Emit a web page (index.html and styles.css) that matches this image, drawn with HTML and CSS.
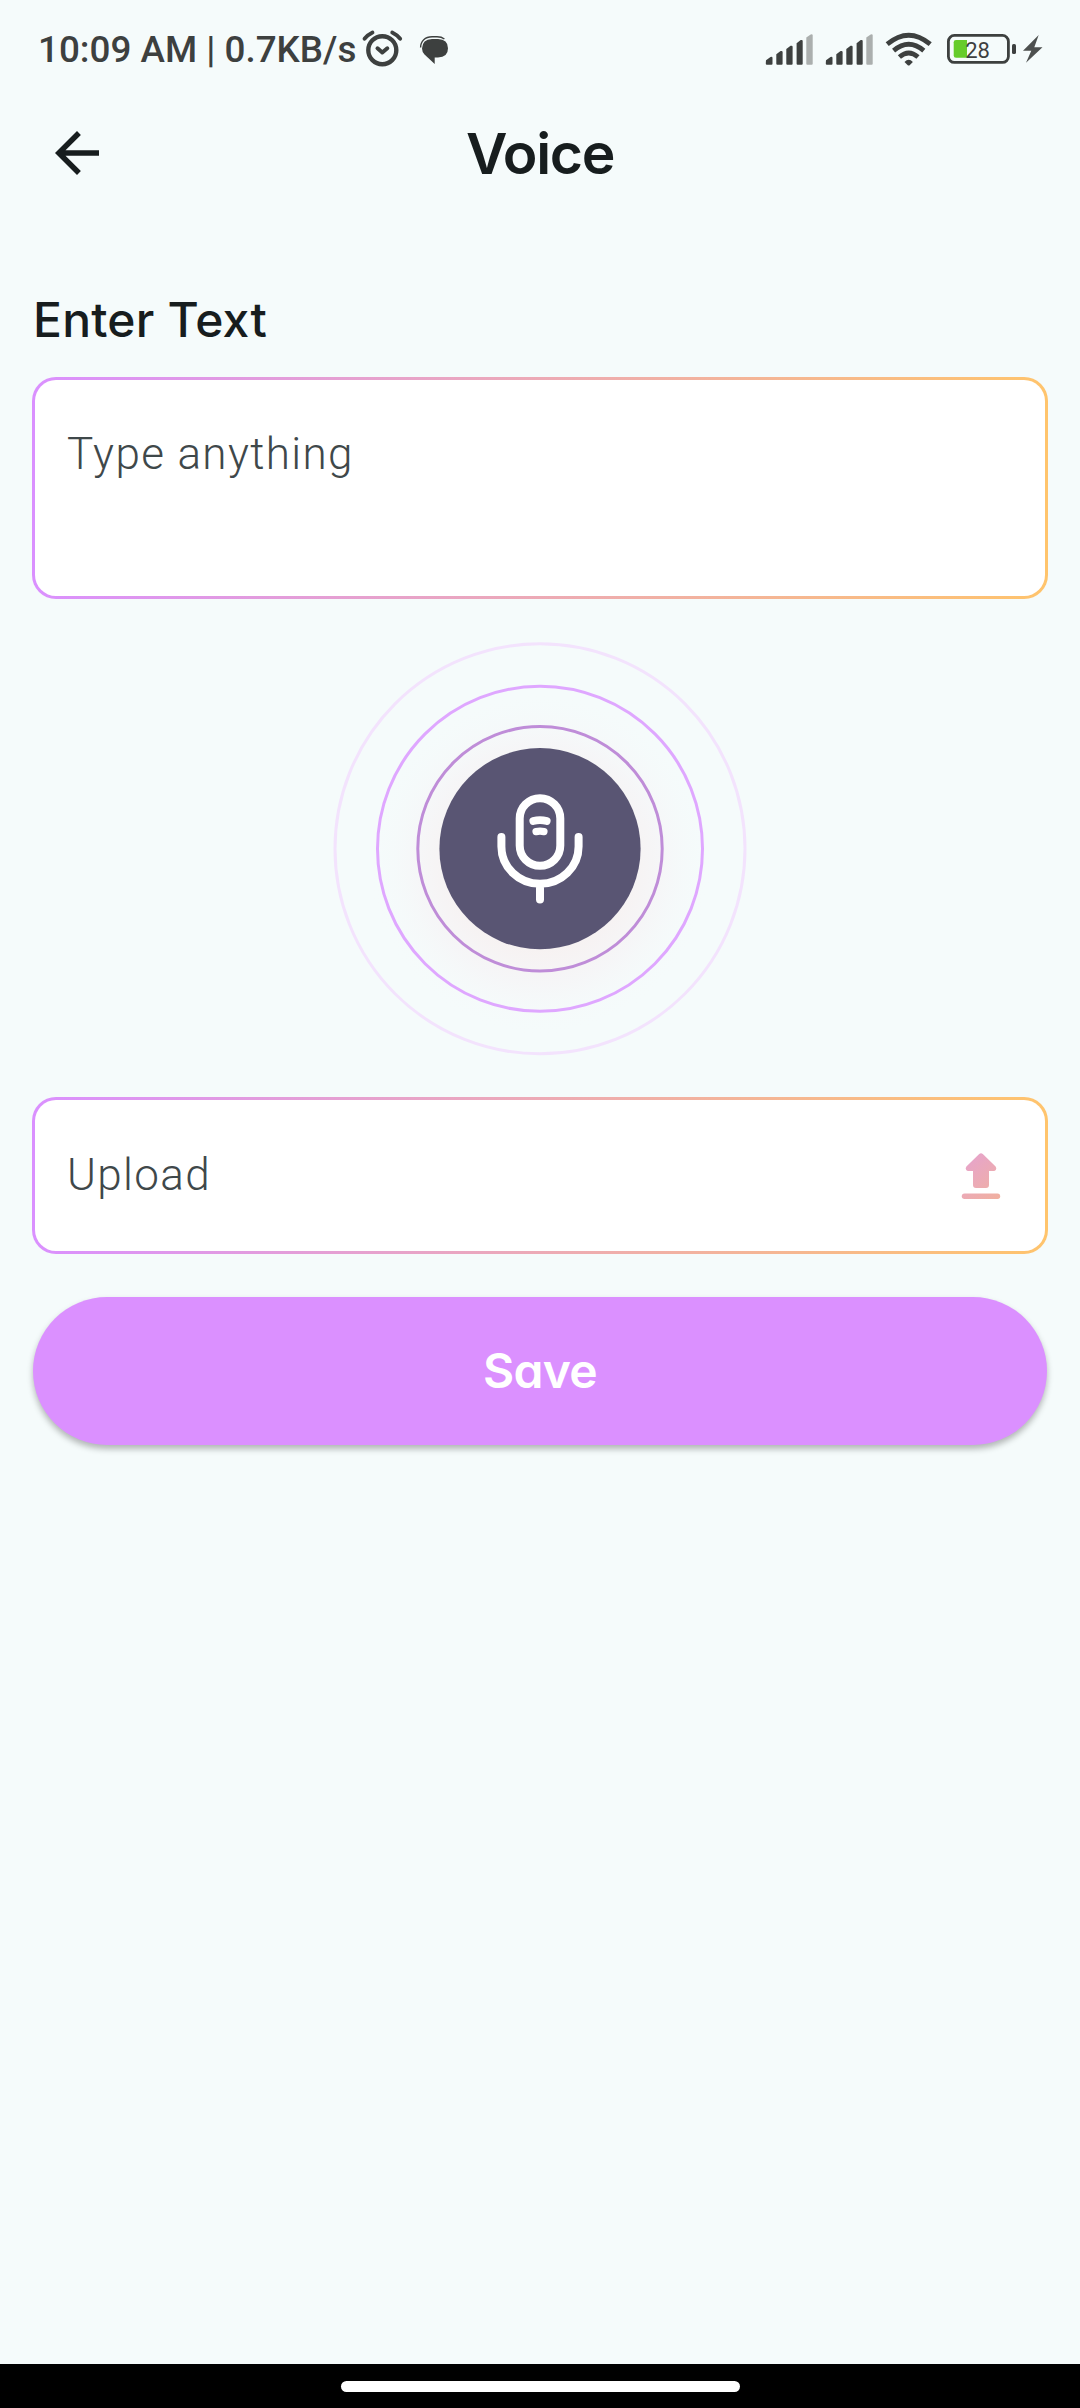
FILE: index.html
```html
<!DOCTYPE html>
<html lang="en">
<head>
<meta charset="utf-8">
<title>Voice</title>
<link rel="stylesheet" href="styles.css">
</head>
<body>
<div class="screen">
  <div class="status">
    <span class="clock">10:09 AM | 0.7KB/s</span>
    <svg class="notices" width="90" height="40" viewBox="360 28 90 40">
      <g fill="none" stroke="#3d403f" stroke-linecap="round" stroke-linejoin="round">
        <circle cx="382.3" cy="50.2" r="14" stroke-width="4.4"/>
        <path d="M364.5 38.8q3.2-4 8-6.3M400.2 38.8q-3.2-4-8-6.3" stroke-width="3.8"/>
        <path d="M377.5 48.3l4.800 4.200 5-4.200" stroke-width="4"/>
      </g>
      <path d="M420.600 47.500c0-6.500 4.500-10.700 11.500-10.700h5c3 0 5.500.8 7.300 2.200" fill="none" stroke="#3d403f" stroke-width="1.400"/>
      <path d="M432 39h6q10 .3 10 9.300t-10 9.300h-3.300V64L424.500 54.500q-2.500-2.700-2.500-6 .3-9.200 10-9.500z" fill="#3d403f"/>
    </svg>
    <svg class="radios" width="280" height="40" viewBox="764 28 280 40">
      <defs>
        <g id="signal">
          <g fill="#3d403f">
            <path d="M766 60.200l4.500-3.200q2-.6 2 1v5.700q0 1-1 1h-4.700q-1 0-1-1z"/>
            <path d="M776.300 54.300l4.300-3.200q2-.6 2 1v11.600q0 1-1 1h-4.300q-1 0-1-1z"/>
            <path d="M786.300 49l4.300-3.200q2-.6 2 1v16.900q0 1-1 1h-4.300q-1 0-1-1z"/>
            <path d="M796.600 43.300l4.100-3.200q2-.6 2 1v22.600q0 1-1 1h-4.100q-1 0-1-1z"/>
          </g>
          <path d="M806.300 37.500l4.400-3.100q2-.6 2 1v28.300q0 1-1 1h-4.400q-1 0-1-1z" fill="#abafae"/>
        </g>
      </defs>
      <use href="#signal"/>
      <use href="#signal" x="60"/>
      <g fill="none" stroke="#3d403f" stroke-width="4.800">
        <path d="M887.200 44.200q21.500-18 43 0"/>
        <path d="M893.600 50.600q15.100-12.800 30.200 0"/>
        <path d="M899.400 57q9.300-8 18.600 0"/>
      </g>
      <path d="M904.500 62q4.200-4.600 8.400 0l-3 3q-1.200 1-2.400 0z" fill="#3d403f"/>
      <rect x="948.400" y="35.400" width="60" height="27" rx="6" fill="none" stroke="#3d403f" stroke-width="2.800"/>
      <path d="M967 40h-11q-2.300 0-2.300 2.300v13.200q0 2.300 2.300 2.300h11z" fill="#66cc2b"/>
      <text class="charge" x="965.200" y="57.700">28</text>
      <rect x="1012" y="44" width="4" height="10" rx="1.600" fill="#3d403f"/>
      <path d="M1038.700 35l-15.700 15.800h8.300l-5.300 12 16.500-15.600h-8.200z" fill="#4d504f"/>
    </svg>
  </div>
  <div class="appbar">
    <svg class="back" width="66" height="66" viewBox="0 0 24 24"><path d="M20 11H7.830l5.590-5.590L12 4l-8 8 8 8 1.410-1.410L7.830 13H20z" fill="#171d1e"/></svg>
    <h1 class="title">Voice</h1>
  </div>
  <div class="form">
    <h2 class="label">Enter Text</h2>
    <div class="field field-text"><span class="hint">Type anything</span></div>
    <svg class="mic" width="440" height="440" viewBox="0 0 440 440">
      <defs>
        <radialGradient id="glow">
          <stop offset="0.500" stop-color="#f7efef" stop-opacity=".75"/>
          <stop offset="0.700" stop-color="#f6f4f6" stop-opacity=".7"/>
          <stop offset="1" stop-color="#f5fbfb" stop-opacity="0"/>
        </radialGradient>
      </defs>
      <circle cx="220" cy="234" r="172" fill="url(#glow)"/>
      <g fill="none" stroke-width="3">
        <circle cx="220" cy="218.800" r="205" stroke="#f3e3fd"/>
        <circle cx="220" cy="218.800" r="162.500" stroke="#dfa7ff"/>
        <circle cx="220" cy="218.800" r="122.200" stroke="#bf8dd8"/>
      </g>
      <circle cx="220" cy="218.700" r="100.600" fill="#595573"/>
      <g fill="none" stroke="#fff" stroke-width="8" stroke-linecap="round">
        <rect x="199.700" y="168.200" width="40.600" height="67.600" rx="20.300"/>
        <path d="M181.400 207v9.500a38.600 37.400 0 0 0 77.200 0V207M220 254v15.500"/>
        <path d="M213.200 191q6.800-1.800 13.600 0" stroke-width="7.600"/>
        <path d="M216 201.600q4-.8 8 0" stroke-width="7.200"/>
      </g>
    </svg>
    <div class="field field-upload">
      <span class="hint">Upload</span>
      <svg class="upload" width="40" height="48" viewBox="961 1151 40 48">
        <defs><linearGradient id="tint" x1="961" y1="1151" x2="1001" y2="1199" gradientUnits="userSpaceOnUse"><stop offset="0" stop-color="#e5a2d2"/><stop offset="1" stop-color="#f1b19e"/></linearGradient></defs>
        <path d="M979.200 1153q1.800-1.500 3.600 0l12.800 12.500q1.300 1.800.3 3.300-.7 1.200-2.200 1.200H989v14q0 3-3 3h-10q-3 0-3-3v-14h-4.700q-1.500 0-2.200-1.200-1-1.500.3-3.300z" fill="url(#tint)"/>
        <rect x="961.800" y="1192.600" width="38.400" height="5.400" rx="2.700" fill="url(#tint)"/>
      </svg>
    </div>
    <button class="save">Save</button>
  </div>
  <div class="navbar"><div class="handle"></div></div>
</div>
</body>
</html>
```
FILE: styles.css
```css
* { box-sizing: border-box; }

body {
  margin: 0;
  background: #f5fbfb;
  color: #171d1e;
  font-family: Inter, "Open Sans", sans-serif;
}

.screen {
  display: flex;
  flex-direction: column;
  width: 1080px;
  height: 2408px;
}

.status {
  display: flex;
  align-items: center;
  height: 100px;
  padding: 0 36px 4px 38px;
}

.clock {
  width: 322px;
  padding-top: 4px;
  color: #3d403f;
  font: 500 36.8px/40px Roboto, sans-serif;
  white-space: nowrap;
}

.radios { margin-left: auto; }

.charge {
  fill: #3d403f;
  font: 400 22px Roboto, sans-serif;
}

.appbar {
  display: grid;
  grid-template-columns: 66px 1fr 66px;
  align-items: center;
  height: 106px;
  padding: 0 44px;
}

.title {
  margin: 2px 0 0;
  text-align: center;
  font-size: 57px;
  font-weight: 600;
  line-height: 70px;
  letter-spacing: -1.3px;
}

.form {
  display: flex;
  flex: 1;
  flex-direction: column;
  padding: 84px 32px 0;
}

.label {
  margin: 0;
  padding-left: 1px;
  font-size: 48px;
  font-weight: 500;
  line-height: 60px;
  height: 87px;
  letter-spacing: .2px;
}

.field {
  display: flex;
  border: 3px solid transparent;
  border-radius: 24px;
  background: linear-gradient(#fff, #fff) padding-box,
    linear-gradient(90deg, #da90ff, #ffc46c) border-box;
}

.field-text {
  height: 222px;
  padding: 46px 32px;
}

.field-upload {
  align-items: center;
  justify-content: space-between;
  height: 157px;
  padding: 0 44px 0 32px;
}

.hint {
  color: #3f484a;
  font: 300 44px/56px Roboto, sans-serif;
  letter-spacing: 1.37px;
}

.field-upload .hint { padding-bottom: 2px; }

.mic {
  align-self: center;
  margin: 31px 0 27px;
}

.save {
  height: 148px;
  margin: 43px 1px 0;
  border: 0;
  border-radius: 74px;
  background: #db90ff;
  box-shadow: 0 4px 6px rgba(0, 0, 0, .28);
  color: #fff;
  font: 600 48px/60px Inter, sans-serif;
  font-feature-settings: "cv11";
  letter-spacing: -.7px;
}

.navbar {
  display: flex;
  justify-content: center;
  height: 44px;
  padding-top: 17px;
  background: #000;
}

.handle {
  width: 399px;
  height: 11px;
  border-radius: 6px;
  background: #fff;
}
```
